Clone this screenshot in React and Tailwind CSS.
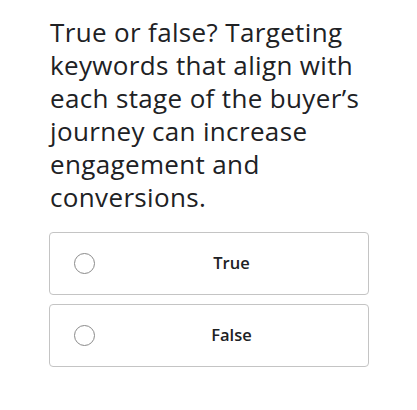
export default function App() {
  const options = ["True", "False"];
  return (
    <div className="w-[417px] h-[410px] bg-white" style={{ fontFamily: '"Open Sans", Roboto, sans-serif' }}>
      <div className="pl-[50px] pr-[30px] pt-[16px]">
        <p className="text-[26px] leading-[33px] text-[#202124] tracking-[0.35px]">
          True or false? Targeting keywords that align with each stage of the buyer’s journey can increase engagement and conversions.
        </p>
        <div className="mt-[18px] -ml-[1px] w-[320px] flex flex-col gap-[9px]">
          {options.map((o) => (
            <div key={o} className="h-[63px] rounded-[4px] border border-[#c4c4c4] flex items-center pl-[24px]">
              <span className="w-[21px] h-[21px] rounded-full border border-[#8a8a8a] shrink-0" />
              <span className="flex-1 text-center text-[16.5px] font-semibold text-[#202124]">{o}</span>
            </div>
          ))}
        </div>
      </div>
    </div>
  );
}
